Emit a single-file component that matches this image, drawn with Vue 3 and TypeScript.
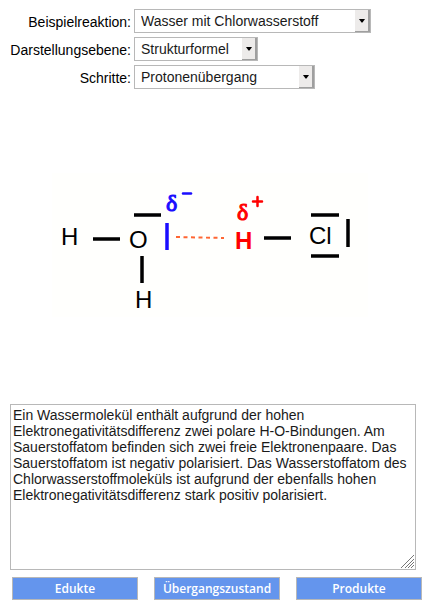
<script setup lang="ts">
import { ref } from 'vue'

interface Choice {
  id: string
  label: string
  value: string
}

const choices = ref<Choice[]>([
  { id: 'reaktion', label: 'Beispielreaktion:', value: 'Wasser mit Chlorwasserstoff' },
  { id: 'ebene', label: 'Darstellungsebene:', value: 'Strukturformel' },
  { id: 'schritte', label: 'Schritte:', value: 'Protonenübergang' },
])

const description = ref(
  'Ein Wassermolekül enthält aufgrund der hohen Elektronegativitätsdifferenz zwei polare H-O-Bindungen. Am Sauerstoffatom befinden sich zwei freie Elektronenpaare. Das Sauerstoffatom ist negativ polarisiert. Das Wasserstoffatom des Chlorwasserstoffmoleküls ist aufgrund der ebenfalls hohen Elektronegativitätsdifferenz stark positiv polarisiert.',
)

const steps = ['Edukte', 'Übergangszustand', 'Produkte']
</script>

<template>
  <main class="page">
    <form class="choices" @submit.prevent>
      <template v-for="choice in choices" :key="choice.id">
        <label :for="choice.id">{{ choice.label }}</label>
        <div class="select" :class="choice.id">
          <select :id="choice.id" v-model="choice.value">
            <option>{{ choice.value }}</option>
          </select>
          <span class="arrow" aria-hidden="true">
            <svg viewBox="0 0 6 4"><path d="M0 0H6L3.5 3.5H2.5Z" /></svg>
          </span>
        </div>
      </template>
    </form>

    <figure class="molecule">
      <svg viewBox="0 0 316 144" role="img">
        <rect width="316" height="144" fill="#fffffd" />
        <g class="bonds">
          <path d="M82 42H109M41 66H68M90 83V110M212 65H239M259 42H287M259 83H287M296 46V74" />
          <path class="negative" d="M115 50V77" />
        </g>
        <path class="bridge" d="M124 64L172 65" />
        <path class="sign negative" d="M131 20.500H139" />
        <path class="sign positive" d="M201 28.500H210M205.500 24V33" />
        <g class="atoms">
          <text x="9" y="72">H</text>
          <text x="77" y="75">O</text>
          <text x="83" y="135">H</text>
          <text x="257" y="71">Cl</text>
          <text class="charged" x="183" y="76">H</text>
        </g>
        <text class="delta minus" x="114" y="38">δ</text>
        <text class="delta plus" x="185" y="47">δ</text>
      </svg>
    </figure>

    <div class="description">
      <textarea v-model="description" aria-label="Beschreibung" spellcheck="false"></textarea>
      <svg class="grip" viewBox="0 0 13 13" aria-hidden="true">
        <path d="M0 13L13 0M4 13L13 4M7 13L13 7M10 13L13 10" />
      </svg>
    </div>

    <div class="steps">
      <button v-for="step in steps" :key="step" type="button">{{ step }}</button>
    </div>
  </main>
</template>

<style>
body {
  background: #fff;
}
</style>

<style scoped>
.page {
  padding: 9px 11px 14px 10px;
  font: 14px/16px 'Liberation Sans', Arial, sans-serif;
  color: #000;
}

.choices {
  display: grid;
  grid-template-columns: 121px 1fr;
  gap: 4px 3px;
  align-items: center;
}

label {
  justify-self: end;
  padding-top: 1px;
  white-space: nowrap;
}

.select {
  position: relative;
  max-width: 100%;
}

.reaktion {
  width: 237px;
}

.ebene {
  width: 124px;
}

.schritte {
  width: 181px;
}

select {
  display: block;
  box-sizing: border-box;
  width: 100%;
  height: 24px;
  margin: 0;
  padding: 0 16px 0 6px;
  border: 1px solid #b8b8b8;
  border-radius: 0;
  appearance: none;
  background: #fff;
  color: #1a1a1a;
  font: inherit;
}

.arrow {
  position: absolute;
  top: 1px;
  right: 1px;
  bottom: 1px;
  display: grid;
  place-items: center;
  width: 15px;
  box-sizing: border-box;
  border: solid #9f9f9f;
  border-width: 0 2px 1px 0;
  background: #edebea;
  pointer-events: none;
}

.arrow svg {
  width: 6px;
  height: 4px;
}

.molecule {
  margin: 0;
  padding: 84px 54px 87px 42px;
}

.molecule svg {
  display: block;
  width: 100%;
}

.bonds {
  fill: none;
  stroke: #000;
  stroke-width: 3.5;
}

.bonds .negative,
.sign.negative {
  stroke: #1a0dff;
}

.bridge {
  stroke: #ff6633;
  stroke-width: 2;
  stroke-dasharray: 4 3.5;
}

.sign {
  fill: none;
  stroke-linecap: round;
  stroke-width: 2.5;
}

.sign.positive {
  stroke: #f00;
}

.atoms {
  font-size: 24px;
}

.charged {
  fill: #f00;
  font-weight: bold;
}

.delta {
  font: 24px 'Liberation Serif', serif;
  stroke-width: 1;
}

.minus {
  fill: #1a0dff;
  stroke: #1a0dff;
}

.plus {
  fill: #f00;
  stroke: #f00;
}

.description {
  position: relative;
  margin-right: 6px;
}

textarea {
  display: block;
  box-sizing: border-box;
  width: 100%;
  height: 166px;
  margin: 0;
  padding: 2px;
  border: 1px solid #b8b8b8;
  border-radius: 0;
  background: #fff;
  color: #1a1a1a;
  font: inherit;
  resize: none;
}

.grip {
  position: absolute;
  right: 2px;
  bottom: 2px;
  width: 13px;
  height: 13px;
  stroke: #777;
}

.steps {
  display: grid;
  grid-template-columns: repeat(3, 1fr);
  gap: 16px;
  margin: 7px 0 0 2px;
}

button {
  height: 23px;
  padding: 0;
  border: 1px solid #b8b8b8;
  background: #6495ed;
  color: #fff;
  font: 600 12px 'Open Sans', 'Noto Sans', sans-serif;
}
</style>
